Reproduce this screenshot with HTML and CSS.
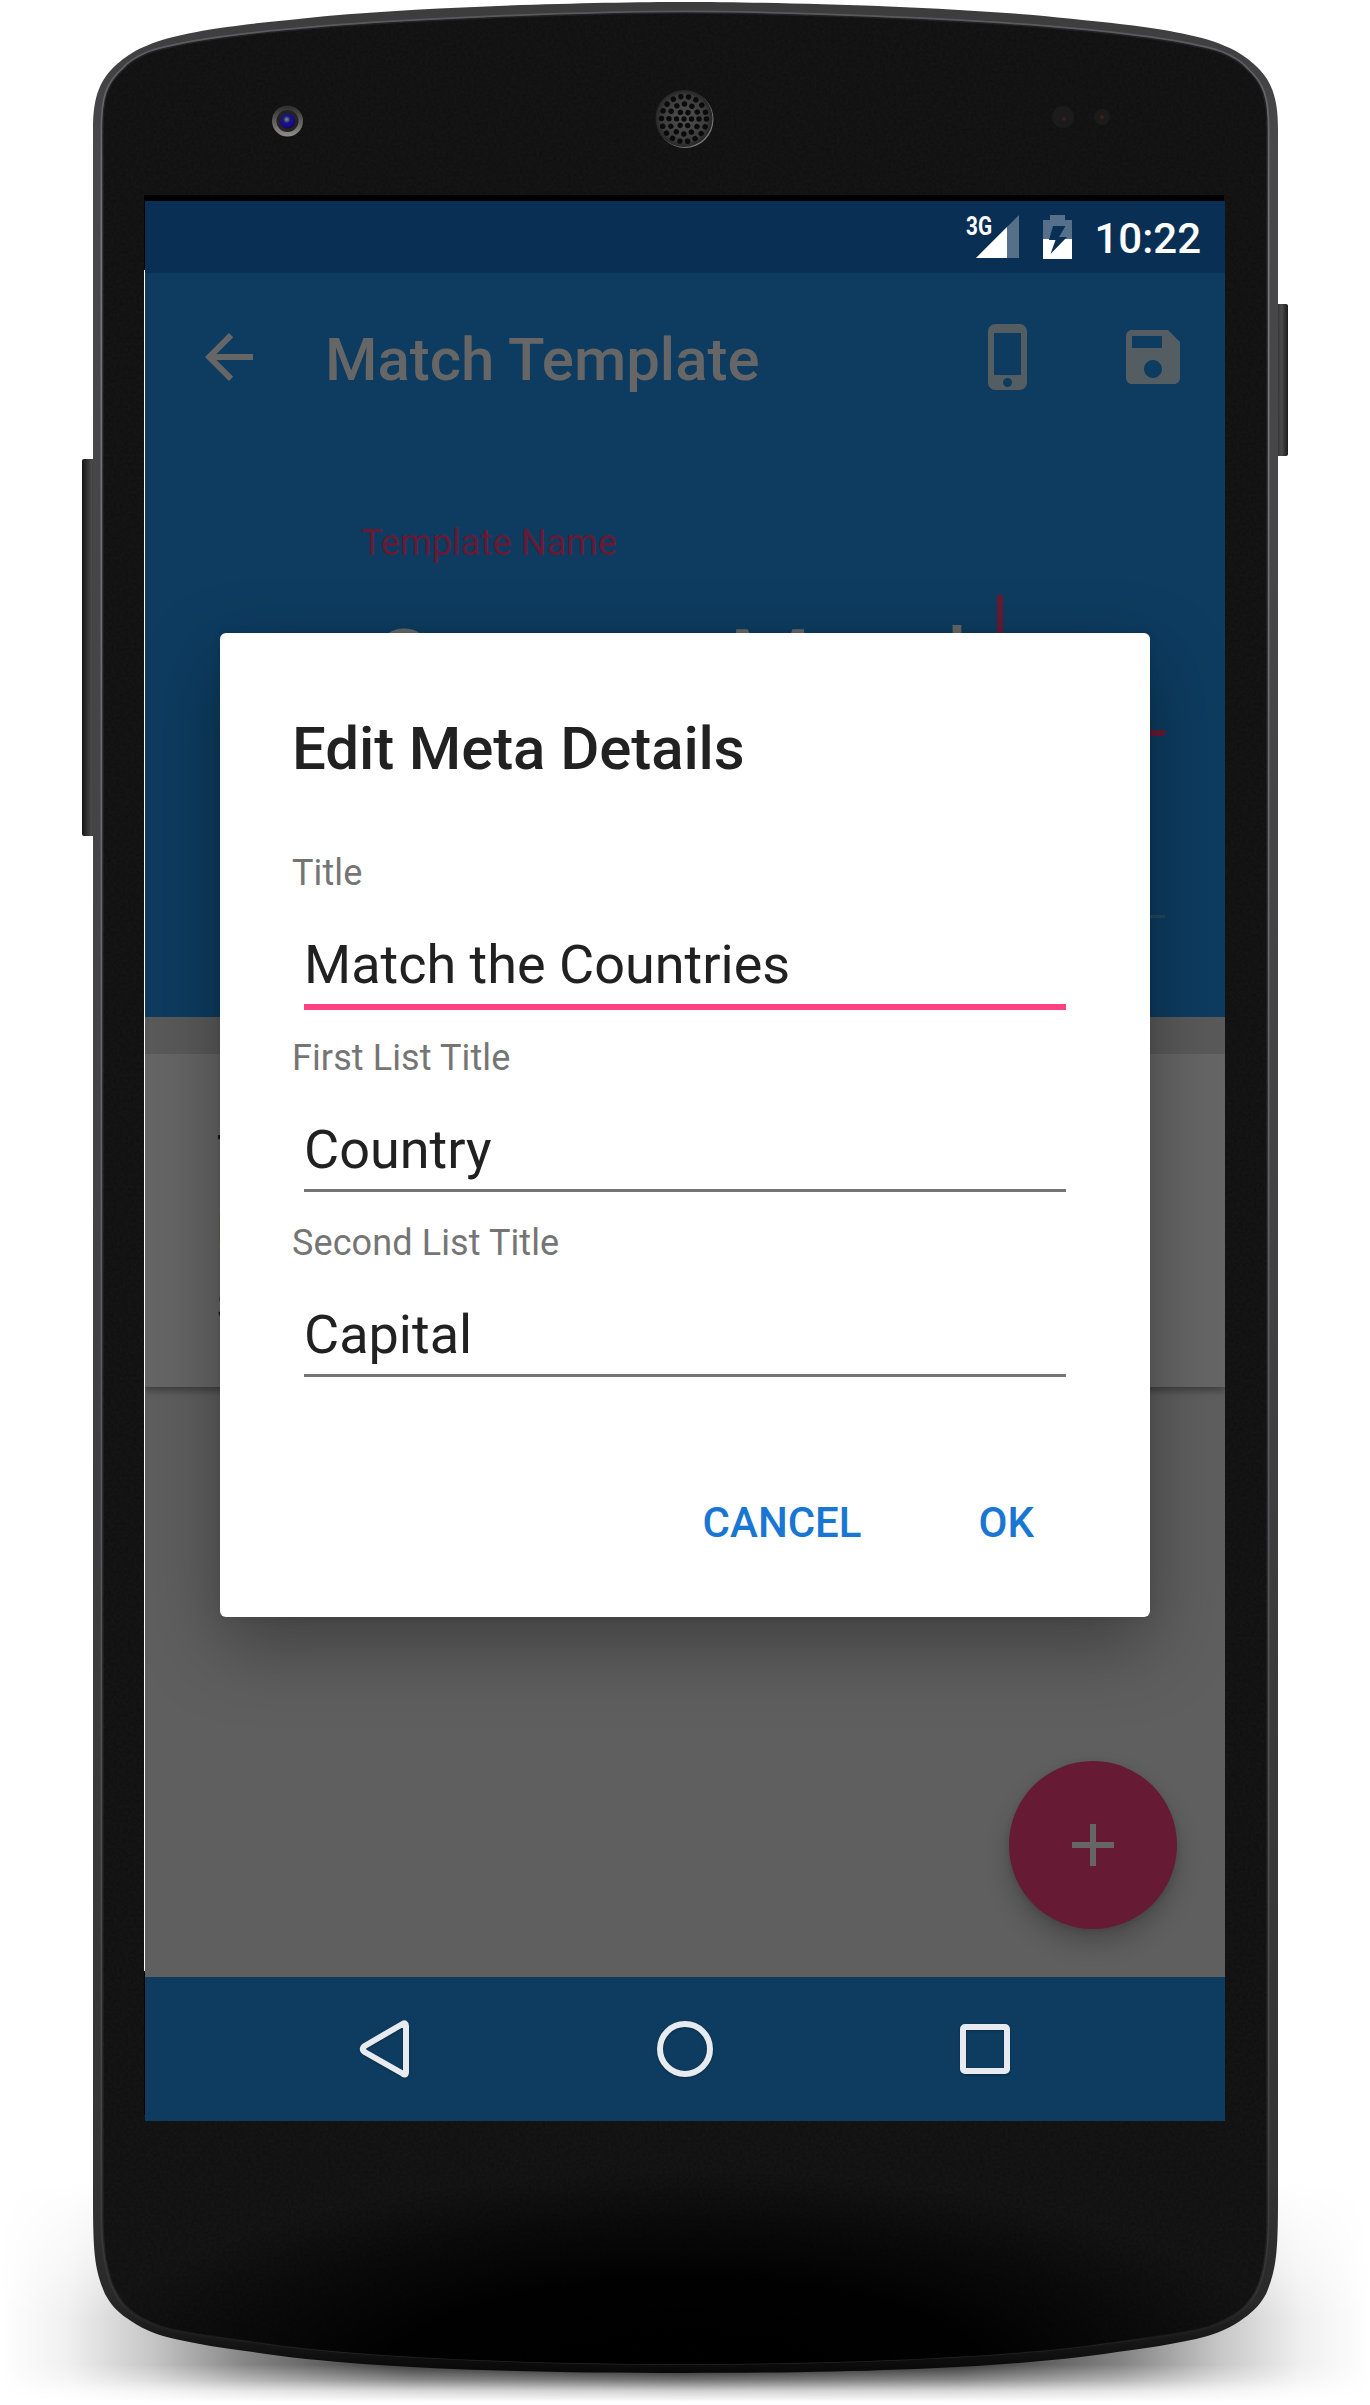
FILE: index.html
```html
<!DOCTYPE html>
<html lang="en">
<head>
<meta charset="utf-8">
<title>Match Template</title>
<link rel="stylesheet" href="styles.css">
</head>
<body>
<div class="phone">
  <svg class="shell" viewBox="0 0 1370 2405" aria-hidden="true">
    <defs>
      <linearGradient id="floorX" x1="0" x2="1">
        <stop offset="0" stop-opacity="0"/><stop offset=".05" stop-opacity=".06"/><stop offset=".11" stop-opacity=".22"/>
        <stop offset=".18" stop-opacity=".48"/><stop offset=".3" stop-opacity=".78"/><stop offset=".5" stop-opacity=".93"/>
        <stop offset=".7" stop-opacity=".78"/><stop offset=".82" stop-opacity=".48"/><stop offset=".89" stop-opacity=".22"/>
        <stop offset=".95" stop-opacity=".06"/><stop offset="1" stop-opacity="0"/>
      </linearGradient>
      <linearGradient id="floorY" x1="0" x2="0" y1="0" y2="1">
        <stop offset="0" stop-color="#000"/><stop offset=".4" stop-color="#888"/><stop offset=".62" stop-color="#fff"/><stop offset=".83" stop-color="#fff"/>
        <stop offset=".9" stop-color="#999"/><stop offset=".95" stop-color="#333"/><stop offset="1" stop-color="#000"/>
      </linearGradient>
      <mask id="floorMask"><rect x="0" y="2180" width="1370" height="222" fill="url(#floorY)"/></mask>
      <linearGradient id="rim" x1="0" x2="0" y1="0" y2="1">
        <stop offset="0" stop-color="#3c3c3d"/><stop offset=".06" stop-color="#48484a"/><stop offset=".5" stop-color="#424244"/>
        <stop offset=".92" stop-color="#333"/><stop offset=".97" stop-color="#282828"/><stop offset="1" stop-color="#080808"/>
      </linearGradient>
      <linearGradient id="edge" x1="0" x2="0" y1="0" y2="1">
        <stop offset="0" stop-color="#59595c"/><stop offset=".1" stop-color="#77777c"/><stop offset=".4" stop-color="#68686c"/>
        <stop offset=".9" stop-color="#444"/><stop offset=".97" stop-color="#333"/><stop offset="1" stop-color="#0c0c0c"/>
      </linearGradient>
      <radialGradient id="chin" cx=".5" cy=".5" r=".5">
        <stop offset="0" stop-color="#000"/><stop offset=".5" stop-color="#000" stop-opacity=".9"/><stop offset=".75" stop-color="#000" stop-opacity=".5"/><stop offset="1" stop-color="#000" stop-opacity="0"/>
      </radialGradient>
      <linearGradient id="key" x1="0" x2="1"><stop offset="0" stop-color="#161616"/><stop offset=".6" stop-color="#4a4a4a"/><stop offset="1" stop-color="#1a1a1a"/></linearGradient>
      <linearGradient id="ring" x1="0" x2="0" y1="0" y2="1"><stop offset="0" stop-color="#2c2c2c"/><stop offset="1" stop-color="#908e8b"/></linearGradient>
      <radialGradient id="lens" cx=".45" cy=".4" r=".6"><stop offset="0" stop-color="#8290a8"/><stop offset=".4" stop-color="#1b1b66"/><stop offset=".8" stop-color="#1607a0"/><stop offset="1" stop-color="#100838"/></radialGradient>
      <radialGradient id="grille" cx=".5" cy=".5" r=".5"><stop offset="0" stop-color="#505050"/><stop offset=".8" stop-color="#3b3b3b"/><stop offset="1" stop-color="#262626"/></radialGradient>
      <filter id="grain" x="0" y="0" width="1" height="1">
        <feTurbulence type="fractalNoise" baseFrequency=".35" numOctaves="2" seed="4"/>
        <feColorMatrix values="0 0 0 0 0  0 0 0 0 0  0 0 0 0 0  1.4 0 0 0 -.45"/>
      </filter>
      <path id="face" d="M685 13C590 13 410 20 319 28C270 32 228 37 194 42.5C170 47 160 49 149 53C137 58 130 62 124 69C107 84 103 98 103 130V2215C103 2250 107 2270 113 2285C121 2304 131 2312 144 2319C155 2325 165 2328 175 2330C200 2335 225 2338 262 2343C340 2355 500 2364 685 2364C870 2364 1030 2355 1108 2343C1145 2338 1170 2335 1195 2330C1205 2328 1215 2325 1226 2319C1240 2312 1250 2304 1258 2285C1264 2270 1267 2250 1267 2215V130C1267 98 1263 84 1246 69C1240 62 1233 58 1221 53C1210 49 1200 47 1176 42.5C1142 37 1100 32 1051 28C960 20 780 13 685 13Z"/>
      <clipPath id="faceClip"><use href="#face"/></clipPath>
    </defs>
    <rect x="0" y="2180" width="1370" height="222" fill="url(#floorX)" mask="url(#floorMask)"/>
    <rect x="82" y="459" width="16" height="377" rx="2" fill="url(#key)"/>
    <rect x="1272" y="304" width="16" height="152" rx="2" fill="url(#key)"/>
    <path fill="url(#rim)" d="M685 2C600 2 440 6 327 16C290 20 255 23 227 27C203 30 186 34 169 38C152 43 142 47 132 53C121 60 117 64 111 70C96 86 93 106 93 130V2200C93 2255 95 2270 105 2294C112 2307 120 2314 131 2321C146 2331 158 2335 175 2339C197 2344 222 2348 253 2352C350 2367 500 2373 685 2373C870 2373 1020 2367 1117 2352C1148 2348 1173 2344 1196 2339C1212 2335 1225 2331 1240 2321C1250 2314 1259 2307 1266 2294C1276 2270 1278 2255 1278 2200V130C1278 106 1275 86 1260 70C1254 64 1250 60 1239 53C1229 47 1219 43 1202 38C1185 34 1168 30 1144 27C1116 23 1081 20 1044 16C931 6 770 2 685 2Z"/>
    <use href="#face" fill="#151515" stroke="url(#edge)" stroke-width="5"/>
    <use href="#face" fill="#151515" stroke="#242426" stroke-width="1.5"/>
    <g clip-path="url(#faceClip)">
      <ellipse cx="685" cy="2385" rx="620" ry="215" fill="url(#chin)"/>
      <rect x="100" y="10" width="1170" height="2360" filter="url(#grain)" opacity=".3"/>
    </g>
    <circle cx="287.500" cy="121" r="15.500" fill="url(#ring)"/>
    <circle cx="287.500" cy="121" r="11" fill="#242321"/>
    <circle cx="287.500" cy="121" r="7.500" fill="url(#lens)"/>
    <circle cx="685" cy="119.500" r="28.500" fill="#777"/>
    <circle cx="684" cy="118.500" r="28.500" fill="url(#grille)"/>
    <g fill="none" stroke="#0a0a0a" stroke-width="5.400" stroke-linecap="round">
      <circle cx="684" cy="119" r="7.500" stroke-dasharray=".01 7.844"/>
      <circle cx="684" cy="119" r="15" stroke-dasharray=".01 7.844"/>
      <circle cx="684" cy="119" r="22.500" stroke-dasharray=".01 7.844"/>
      <path d="M684 119h.01"/>
    </g>
    <circle cx="1063" cy="117" r="11" fill="#1b1b1b"/><circle cx="1064" cy="119" r="2" fill="#3a2218"/>
    <circle cx="1102" cy="117" r="8" fill="#1b1b1b"/><circle cx="1102" cy="117" r="2" fill="#3a2218"/>
    <path d="M144 195h1080v6H145v69h-1zM144 1971h1v144h-1z" fill="#000"/>
    <path d="M144 270h1v1701h-1z" fill="#fff"/>
  </svg>

  <main class="screen">
    <header class="status">
      <svg class="signal" viewBox="-4 -10 58 54" width="58" height="54">
        <path d="M53 0V43H10z" fill="#56708a"/>
        <path d="M41 12V43H10z" fill="#fff"/>
        <text x="0" y="19.500" textLength="26" lengthAdjust="spacingAndGlyphs" class="network">3G</text>
      </svg>
      <svg class="battery" viewBox="0 0 29 44" width="29" height="44">
        <path d="M7 0H22V5H29V24H0V5H7z" fill="#56708a"/>
        <path d="M0 24H29V44H0z" fill="#fff"/>
        <path d="M10 11H22.500L16 22H24L7.500 39L12.500 25H6z" fill="#0a2f54"/>
      </svg>
      <time class="clock">10:22</time>
    </header>

    <section class="appbar">
      <div class="toolbar">
        <svg class="icon back" viewBox="0 0 24 24"><path d="M20 11H7.830l5.590-5.590L12 4l-8 8 8 8 1.410-1.410L7.830 13H20z"/></svg>
        <h1 class="heading">Match Template</h1>
        <svg class="icon action" viewBox="0 0 24 24"><path d="M15.500 1h-8C6.120 1 5 2.120 5 3.500v17C5 21.880 6.120 23 7.500 23h8c1.380 0 2.500-1.120 2.500-2.500v-17C18 2.120 16.880 1 15.500 1zm-4 21c-.83 0-1.500-.67-1.500-1.500s.67-1.500 1.500-1.500 1.500.67 1.500 1.500-.67 1.500-1.500 1.500zm4.500-4H7V4h9v14z"/></svg>
        <svg class="icon action" viewBox="0 0 24 24"><path d="M17 3H5c-1.110 0-2 .9-2 2v14c0 1.100.89 2 2 2h14c1.100 0 2-.9 2-2V7l-4-4zm-5 16c-1.660 0-3-1.340-3-3s1.340-3 3-3 3 1.340 3 3-1.340 3-3 3zm3-10H5V5h10v4z"/></svg>
      </div>
      <div class="template">
        <div class="template-label">Template Name</div>
        <div class="template-value">Country Match<i class="caret"></i></div>
        <div class="second-line"></div>
      </div>
    </section>

    <section class="content">
      <div class="meta">
        <div>Title</div>
        <div>First List Title</div>
        <div>Second List Title</div>
      </div>
      <div class="fab"><svg viewBox="0 0 14 14" width="42" height="42"><path d="M6 0h2v6h6v2H8v6H6V8H0V6h6z" fill="#666"/></svg></div>
    </section>

    <nav class="navbar">
      <svg viewBox="0 0 60 60"><path d="M47.500 5Q51 3 51 7V53Q51 57 47.500 54.500L10.500 33.500Q5 30 10.500 26.500Z"/></svg>
      <svg viewBox="0 0 60 60"><circle cx="30" cy="30" r="25"/></svg>
      <svg viewBox="0 0 60 60"><rect x="8" y="8" width="44" height="44" rx="2"/></svg>
    </nav>

    <div class="dialog">
      <h2 class="dialog-title">Edit Meta Details</h2>
      <div class="field focused"><div class="label">Title</div><div class="value">Match the Countries</div></div>
      <div class="field"><div class="label">First List Title</div><div class="value">Country</div></div>
      <div class="field"><div class="label">Second List Title</div><div class="value">Capital</div></div>
      <div class="buttons"><span>CANCEL</span><span>OK</span></div>
    </div>
  </main>
</div>
</body>
</html>
```
FILE: styles.css
```css
* { box-sizing: border-box; }
body { margin: 0; background: #fff; font-family: Roboto, "Liberation Sans", sans-serif; }
h1, h2 { margin: 0; font-weight: 500; }
svg { display: block; }

.phone { position: relative; width: 1370px; height: 2405px; padding: 201px 145px 0; overflow: hidden; }
.shell { position: absolute; inset: 0; width: 1370px; height: 2405px; }

.screen { position: relative; width: 1080px; height: 1920px; overflow: hidden; display: flex; flex-direction: column; }

.status { height: 72px; padding: 0 24px 0 0; background: #0a2f54; display: flex; justify-content: flex-end; align-items: flex-start; }
.signal { margin: 4px 23px 0 0; }
.battery { margin: 14px 22px 0 0; }
.network { font: 700 26px Roboto, sans-serif; fill: #fff; }
.clock { font-size: 42px; font-weight: 500; line-height: 50px; margin-top: 13px; color: #fff; }

.appbar { height: 744px; background: #0d3c60; }
.toolbar { height: 168px; padding: 0 36px 0 48px; display: flex; align-items: center; }
.icon { width: 72px; height: 72px; flex: none; }
.back { fill: #666; }
.heading { flex: 1; padding: 6px 0 0 60px; font-size: 60px; line-height: 70px; color: #666; white-space: nowrap; }
.action { fill: #535d62; margin-left: 72px; }
.template { padding: 81px 60px 0 216px; }
.template-label { font-size: 36px; line-height: 42px; letter-spacing: .1px; color: #661a34; }
.template-value { display: flex; align-items: flex-start; height: 142px; margin-top: 30px; padding: 0 0 0 10px; font-size: 96px; line-height: 142px; color: #666; border-bottom: 6px solid #661a34; }
.caret { width: 6px; height: 110px; margin: 1px 0 0 -2px; background: #661a34; }
.second-line { height: 182px; border-bottom: 3px solid #25475f; }

.content { flex: 1; background: #5f5f5f; display: flex; flex-direction: column; }
.meta { margin-top: 37px; height: 333px; padding: 72px 72px 0; background: #666; box-shadow: 0 -37px #5a5a5a, 0 3px 8px rgba(0,0,0,.4); color: #191919; font-size: 42px; font-weight: 500; line-height: 50px; display: flex; flex-direction: column; gap: 28px; }
.fab { width: 168px; height: 168px; margin: 374px 48px 0 auto; border-radius: 50%; background: #661a34; box-shadow: 0 14px 24px rgba(0,0,0,.22), 0 2px 6px rgba(0,0,0,.12); display: flex; align-items: center; justify-content: center; }

.navbar { height: 144px; background: #0d3c60; display: flex; align-items: center; justify-content: center; gap: 240px; }
.navbar svg { width: 60px; height: 60px; fill: none; stroke: #e7ebef; stroke-width: 6; stroke-linejoin: round; filter: drop-shadow(0 1px 1px rgba(0,0,0,.3)); }

.dialog { position: absolute; left: 75px; top: 432px; width: 930px; height: 984px; padding: 81px 84px 0 72px; border-radius: 6px; background: #fff; box-shadow: 0 28px 76px rgba(0,0,0,.34), 0 0 10px rgba(0,0,0,.08); color: #212121; }
.dialog-title { font-size: 60px; line-height: 70px; margin-bottom: 68px; letter-spacing: -.1px; }
.field { height: 185px; }
.label { font-size: 36px; line-height: 42px; letter-spacing: .1px; color: #757575; }
.value { margin: 39px 0 0 12px; height: 74px; padding-bottom: 8px; font-size: 54px; line-height: 63px; border-bottom: 3px solid #757575; }
.focused .value { height: 77px; border-bottom: 6px solid #ff4081; }
.buttons { display: flex; justify-content: flex-end; gap: 117px; margin-top: 91px; padding-right: 32px; font-size: 42px; font-weight: 500; line-height: 50px; color: #1976d2; }
```
